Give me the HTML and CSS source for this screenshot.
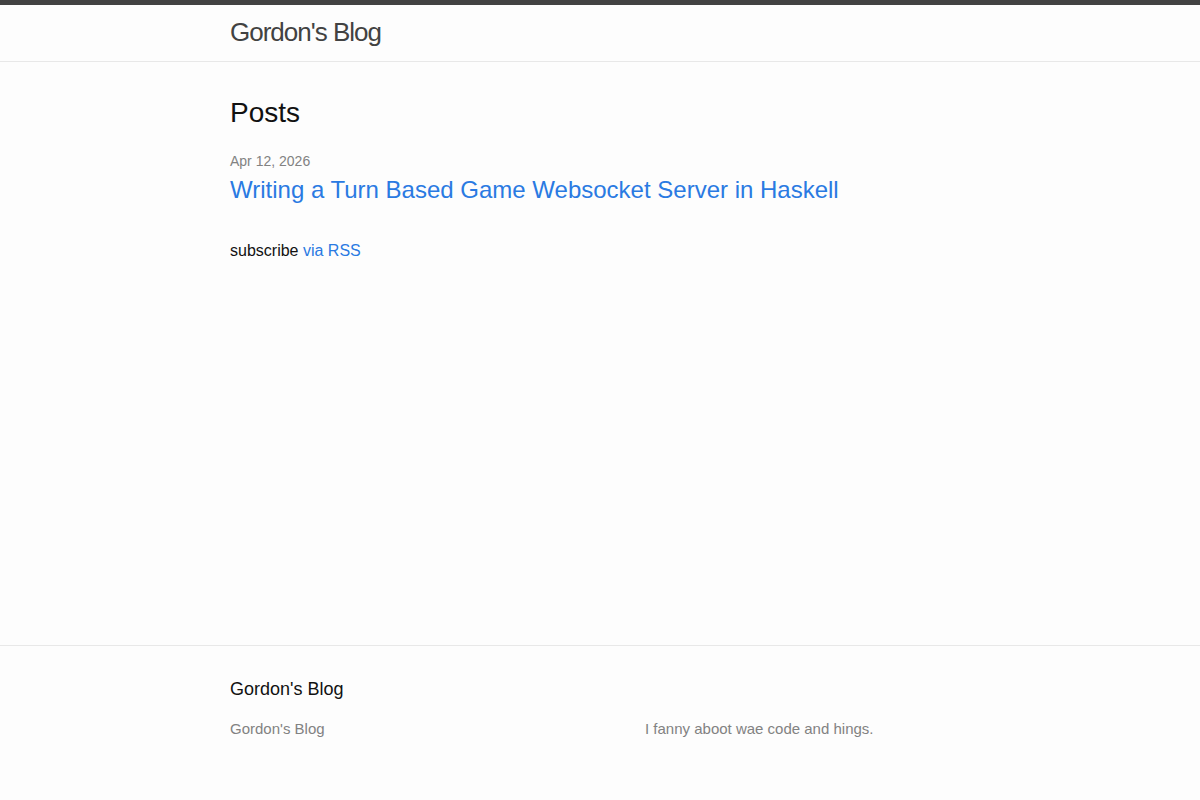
FILE: index.html
```html
<!DOCTYPE html>
<html lang="en">
<head>
    <meta charset="UTF-8">
    <meta name="viewport" content="width=device-width, initial-scale=1.0">
    <title>Gordon's Blog</title>
    <link rel="stylesheet" href="styles.css">
</head>
<body>
    <header class="site-header">
        <div class="wrapper">
            <a class="site-title" href="#">Gordon's Blog</a>
        </div>
    </header>

    <main class="page-content">
        <div class="wrapper">
            <h2 class="post-list-heading">Posts</h2>
            <ul class="post-list">
                <li>
                    <span class="post-meta">Apr 12, 2026</span>
                    <h3>
                        <a class="post-link" href="#">Writing a Turn Based Game Websocket Server in Haskell</a>
                    </h3>
                </li>
            </ul>
            <p class="rss-subscribe">subscribe <a href="#">via RSS</a></p>
        </div>
    </main>

    <footer class="site-footer">
        <div class="wrapper">
            <h2 class="footer-heading">Gordon's Blog</h2>
            <div class="footer-col-wrapper">
                <div class="footer-col">
                    <ul class="contact-list">
                        <li>Gordon's Blog</li>
                    </ul>
                </div>
                <div class="footer-col">
                    <p>I fanny aboot wae code and hings.</p>
                </div>
            </div>
        </div>
    </footer>
</body>
</html>
```

FILE: styles.css
```css
* {
    box-sizing: border-box;
}
html, body {
    margin: 0;
    padding: 0;
}
body {
    font-family: "Liberation Sans", Helvetica, Arial, sans-serif;
    font-size: 16px;
    line-height: 1.5;
    color: #111;
    background-color: #fdfdfd;
    min-height: 100vh;
    display: flex;
    flex-direction: column;
}
a {
    color: #2a7ae2;
    text-decoration: none;
}
h2, h3, p, ul {
    margin: 0;
    font-weight: 400;
}
.wrapper {
    max-width: 740px;
    margin: 0 auto;
}

/* header */
.site-header {
    border-top: 5px solid #424242;
    border-bottom: 1px solid #e8e8e8;
    min-height: 62px;
}
.site-title {
    display: block;
    font-size: 26px;
    font-weight: 300;
    letter-spacing: -1px;
    line-height: 54px;
    color: #424242;
}

/* posts */
.page-content {
    flex: 1;
    padding: 30px 0;
}
.post-list-heading {
    font-size: 28px;
    margin-bottom: 17px;
}
.post-list {
    list-style: none;
    padding: 0;
}
.post-list li {
    margin-bottom: 31px;
}
.post-meta {
    display: block;
    font-size: 14px;
    color: #828282;
}
.post-list h3 {
    font-size: 24px;
}
.rss-subscribe a {
    color: #2a7ae2;
}

/* footer */
.site-footer {
    border-top: 1px solid #e8e8e8;
    padding: 30px 0 45px;
}
.footer-heading {
    font-size: 18px;
    margin-bottom: 15px;
}
.footer-col-wrapper {
    display: grid;
    grid-template-columns: 415px 1fr;
    font-size: 15px;
    color: #828282;
}
.contact-list {
    list-style: none;
    padding: 0;
}
.footer-col p,
.contact-list {
    margin-bottom: 15px;
}
```
